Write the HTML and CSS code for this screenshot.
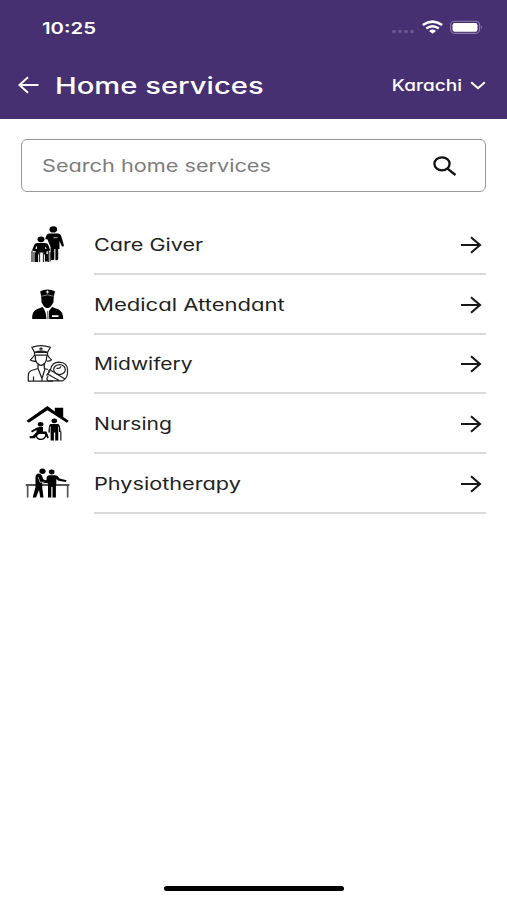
FILE: index.html
```html
<!DOCTYPE html>
<html lang="en">
<head>
<meta charset="utf-8">
<title>Home services</title>
<link rel="stylesheet" href="styles.css">
</head>
<body>
<div class="screen">
  <header class="header">
    <div class="status">
      <span class="time">10:25</span>
      <svg class="status-icons" viewBox="0 0 92 16" fill="#fff">
        <g fill="#6b5891"><ellipse cx="3" cy="11.5" rx="2" ry="1.7"/><ellipse cx="9" cy="11.5" rx="2" ry="1.7"/><ellipse cx="15" cy="11.5" rx="2" ry="1.7"/><ellipse cx="21" cy="11.5" rx="2" ry="1.7"/></g>
        <g fill="none" stroke="#fff" stroke-width="2.5"><path d="M31.8 5.1Q41.5-1.8 51.2 5.1"/><path d="M35.2 8.5Q41.5 4 47.8 8.5"/></g>
        <path d="M38 10.9Q41.5 8.2 45 10.9L41.7 13.8Z"/>
        <rect x="59.6" y="1.2" width="29" height="12.2" rx="4" fill="none" stroke="#8b7cab" stroke-width="1.1"/>
        <rect x="61.5" y="3" width="25" height="8.7" rx="2.3"/>
        <path d="M89.9 5.3Q92 7.2 89.9 9Z" fill="#8b7cab"/>
      </svg>
    </div>
    <div class="bar">
      <svg class="back" viewBox="0 0 22 18"><path d="M10 1.3L1.4 9L10 16.7M1.8 9H20.5"/></svg>
      <h1 class="title">Home services</h1>
      <div class="city"><span class="city-name">Karachi</span>
        <svg class="chevron" viewBox="0 0 16 9"><path d="M1.2 1.2L8 7.2L14.8 1.2"/></svg>
      </div>
    </div>
  </header>
  <main class="content">
    <div class="search">
      <span class="placeholder">Search home services</span>
      <svg class="search-icon" viewBox="0 0 24 20"><ellipse cx="9" cy="7.8" rx="7.6" ry="6.5"/><path d="M14.5 12.6L22.5 19"/></svg>
    </div>
    <ul class="list">
      <li class="row">
        <svg class="icon" viewBox="15 220 65 50">
          <ellipse cx="53.3" cy="229.4" rx="3.8" ry="3.1"/>
          <path d="M49 233.4H58Q60.6 233.6 61.2 236L63.9 245.2Q63.7 247 61.8 246.3L59.5 241V249H58.2V259Q57.5 261 55.4 260V249H54.3V259.5Q52 261 50.6 259.5V247L47.5 239.5L45.3 239Q46 234 49 233.4Z"/>
          <ellipse cx="41" cy="239.3" rx="3.5" ry="2.9"/>
          <path d="M37 243H45Q47.5 243 48.3 245L50.3 250.5L46.5 251.5V254H48V261.5H45V255L42.5 252.5H39.5L38 255V262H35V253L36 251.5L32 250.5L34.2 245Q35 243 37 243Z"/>
          <path d="M36.4 246.2L35.4 248.4L37 249V246.6ZM45.2 246.4V249L46.8 248.5Z" fill="#fff"/>
          <path d="M32 251V262M34 252V262M48.4 251V262M50.2 252V261.5M39.5 252V262M43.5 252V262" fill="none" stroke="#333" stroke-width="1.3"/>
          <path d="M53.5 237.7H57.5" stroke="#ddd" stroke-width=".8"/>
        </svg>
        <div class="cell"><span class="label care">Care Giver</span><svg class="arrow" viewBox="0 0 22 18"><path d="M11 1.3L20 9L11 16.7M1 9H20"/></svg></div>
      </li>
      <li class="row">
        <svg class="icon" viewBox="15 280 65 50">
          <path d="M40.2 291.3Q47.5 287.6 55 291.3L53.8 296.8L53.4 302.5L50.8 306.5Q47.4 309.7 44 306.5L41.6 302.5L41.2 296.8Z"/>
          <path d="M41.5 296.2Q47.5 293.6 53.5 296.2" fill="none" stroke="#ccc" stroke-width=".6"/>
          <path d="M47.5 290.5V293.5M45.8 292H49.2" stroke="#fff" stroke-width=".9"/>
          <path d="M42.5 307Q46 310.5 46.4 319H32.2Q31.8 311.5 36.3 309.4ZM52 307L58.6 309.4Q63.2 311.5 63.2 319H49.3Q48.7 315 49 311Z"/>
          <path d="M46.9 311H48.2L48.9 319H47Z" fill="#888"/>
          <path d="M52 315.2H58.5V317H52Z" fill="#fff"/>
        </svg>
        <div class="cell"><span class="label medical">Medical Attendant</span><svg class="arrow" viewBox="0 0 22 18"><path d="M11 1.3L20 9L11 16.7M1 9H20"/></svg></div>
      </li>
      <li class="row">
        <svg class="icon outline" viewBox="15 339.5 65 50">
          <path d="M34.5 352.8L31.8 347.8Q40.5 344.5 50.5 347.8L47.5 352.8ZM34.5 352.8Q41 350.7 47.5 352.8V355.5H34.5Z"/>
          <path d="M41 347.7V351M39.2 349.3H42.8M34.6 355.5Q32 359 30.3 360.5Q32.5 362 35.5 361.7M47.5 355.5Q49.5 359 51.5 360.3Q49.5 362 46.8 361.7M35.3 356Q35 361 37 363.5Q41 368.2 45 363.5Q46.8 361 46.8 356M38 364.5V369L31.5 371Q28.3 372.3 28.3 376V381.5H53M44.3 364.7V369L48 370M38 369L42 379L45 369.3M33.5 377V381.5M42 379V381.5"/>
          <ellipse cx="59.5" cy="370" rx="5.8" ry="5"/>
          <path d="M50.5 370.3Q51.5 362.8 59 362.6Q67.2 363 67.5 369.8V374Q67 379 62.5 381.3H48Q45.8 378.8 48.3 376.8M48.5 372Q49 369.3 51.5 371.2L65 379.5M47.5 374.5L59 381M50 371.5L46.5 376M56.5 368.8Q60 369.5 61 367"/>
        </svg>
        <div class="cell"><span class="label midwifery">Midwifery</span><svg class="arrow" viewBox="0 0 22 18"><path d="M11 1.3L20 9L11 16.7M1 9H20"/></svg></div>
      </li>
      <li class="row">
        <svg class="icon" viewBox="15 399.5 65 50">
          <path d="M47.4 406.5L54.8 412V408.2H63.2V417.5L68.8 421.3L67 423.2L47.4 410.8L28.8 423.2L26.5 421.3Z"/>
          <ellipse cx="40.6" cy="424.7" rx="2.8" ry="2.3"/>
          <path d="M39 427.5H43V432H46.5L48.8 438L47.5 439L44.8 434.5H39L34.5 438.7H30L29.4 437L33 436.2L36.5 432.4V430.5L32 433L31 431.5L36 428.5Z"/>
          <path d="M37.4 432.5Q34.5 438 39.5 439.8Q44.5 440.5 46 435.5" fill="none" stroke="#000" stroke-width="1.4"/>
          <ellipse cx="54.3" cy="421.3" rx="2.8" ry="2.4"/>
          <path d="M50.5 424.5H58.2Q60.3 425 60.6 432.5H59V427.3H58.3V441H55.2V433H53.9V441H50.6V427H49.8V433H48.4Q48.5 425 50.5 424.5ZM60.3 432H61.4V441H60.3Z"/>
        </svg>
        <div class="cell"><span class="label nursing">Nursing</span><svg class="arrow" viewBox="0 0 22 18"><path d="M11 1.3L20 9L11 16.7M1 9H20"/></svg></div>
      </li>
      <li class="row">
        <svg class="icon" viewBox="15.5 459 65 50">
          <path d="M26.3 484H69.9V486H69V497.5H67.3V486H29V497.5H27.3V486H26.3Z" fill="#555"/>
          <ellipse cx="43" cy="471.2" rx="3.1" ry="2.7"/>
          <path d="M38.6 473.5Q40.8 473.3 42.2 475.2L44 479.4L49.5 481.8L48.8 483.5L42.8 482.2V488L44 497.5H40.8L39.5 490L36.5 497.5H33.2L36 487V477.2Q36.2 474 38.6 473.5Z"/>
          <ellipse cx="52.2" cy="472" rx="2.8" ry="2.4"/>
          <path d="M49.2 475.2H56Q58.3 475.5 60 478.5L67 480.3L66.5 482L59 480.8L56.8 479V484.5H56.4V497.5H53V487H51.8V497.5H48.5V482L44.3 483.5L43.3 482L47 479.7Q47 475.7 49.2 475.2Z"/>
          <path d="M38.6 477L40.5 482.3H45" fill="none" stroke="#fff" stroke-width=".6"/>
        </svg>
        <div class="cell"><span class="label physio">Physiotherapy</span><svg class="arrow" viewBox="0 0 22 18"><path d="M11 1.3L20 9L11 16.7M1 9H20"/></svg></div>
      </li>
    </ul>
  </main>
  <div class="home-indicator"></div>
</div>
</body>
</html>
```
FILE: styles.css
```css
* { box-sizing: border-box; }
body { margin: 0; background: #fff; font-family: Inter, "Open Sans", sans-serif; font-feature-settings: "cv11"; }
svg { display: block; flex: none; }
.screen { width: 507px; height: 900px; display: flex; flex-direction: column; align-items: center; overflow: hidden; }
.header { width: 100%; height: 119px; background: #463072; color: #fff; }
.status { height: 54px; padding: 1px 24px 0 42px; display: flex; align-items: center; justify-content: space-between; }
.status-icons { width: 92px; height: 16px; margin-top: 1px; }
.time { font-size: 16px; font-weight: 600; line-height: 20px; transform: scaleX(1.27); transform-origin: left; }
.bar { height: 62px; padding: 0 21px 0 18px; display: flex; align-items: center; }
.back { width: 22px; height: 18px; fill: none; stroke: #fff; stroke-width: 2; }
.title { margin: 1px 0 0 15px; font-size: 22.5px; font-weight: 500; line-height: 30px; white-space: nowrap; transform: scaleX(1.297); transform-origin: left; }
.city { margin-left: auto; display: flex; align-items: center; gap: 8px; }
.city-name { margin-top: 1px; font-size: 15.5px; font-weight: 500; line-height: 20px; transform: scaleX(1.23); transform-origin: right; }
.chevron { width: 16px; height: 9px; fill: none; stroke: #fff; stroke-width: 2.1; }
.content { width: 100%; padding: 20px 21px 0; }
.search { height: 53px; border: 1.5px solid #999; border-radius: 6px; padding: 0 28px 0 20px; display: flex; align-items: center; justify-content: space-between; }
.placeholder { color: #7c7c7c; font-size: 17px; line-height: 24px; transform: scaleX(1.275); transform-origin: left; }
.search-icon { width: 24px; height: 20px; fill: none; stroke: #111; stroke-width: 2.3; }
.list { list-style: none; margin: 23px 0 0; padding: 0; }
.row { height: 59.75px; display: flex; align-items: center; }
.icon { width: 65px; height: 50px; margin-left: -6px; }
.outline { fill: none; stroke: #222; stroke-width: 1.25; stroke-linejoin: round; }
.cell { flex: 1; height: 100%; margin-left: 14px; padding: 2px 4.5px 0 0; border-bottom: 2px solid #dadada; display: flex; align-items: center; justify-content: space-between; }
.label { color: #222; font-size: 17px; line-height: 24px; white-space: nowrap; transform-origin: left; }
.care { transform: scaleX(1.27); }
.medical { transform: scaleX(1.297); }
.midwifery { transform: scaleX(1.235); }
.nursing { transform: scaleX(1.24); }
.physio { transform: scaleX(1.275); }
.arrow { width: 22px; height: 18px; fill: none; stroke: #181818; stroke-width: 2.1; }
.home-indicator { width: 180px; height: 5px; margin: auto 0 9px; border-radius: 3px; background: #000; }
```
